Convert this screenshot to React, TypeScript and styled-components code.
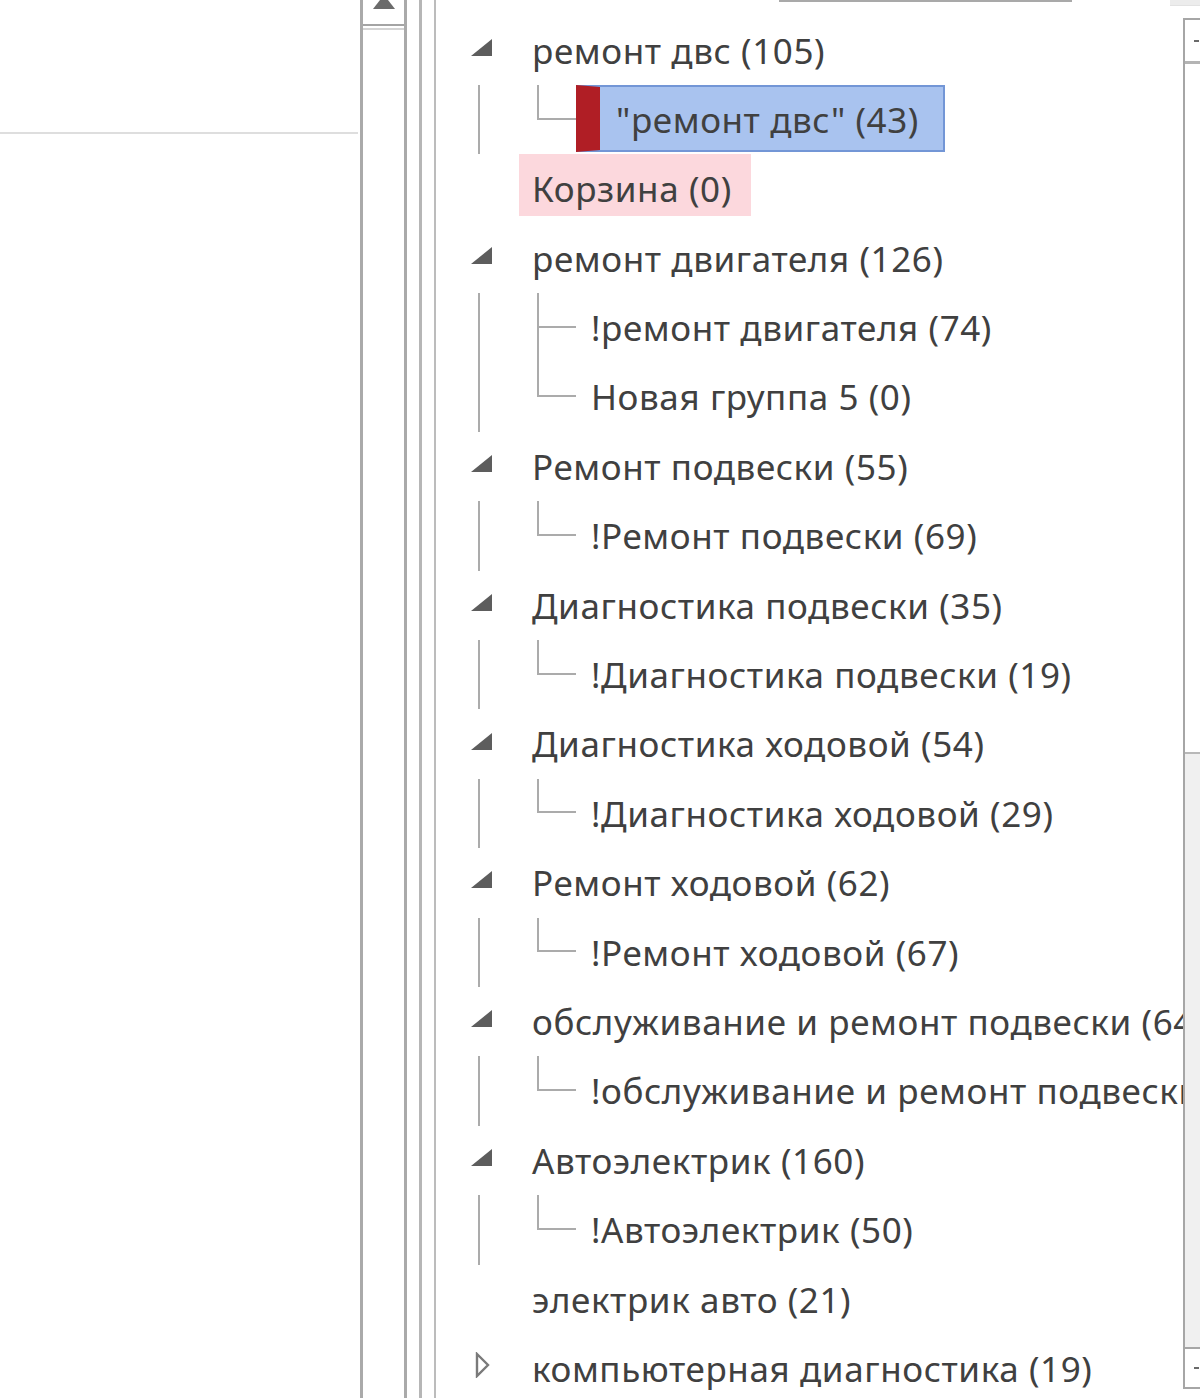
import * as React from 'react'
import styled, { createGlobalStyle } from 'styled-components'

type Child = {
    label: string
    selected?: boolean
}

type Node = {
    label: string
    expanded?: boolean
    collapsed?: boolean
    highlight?: boolean
    children?: Child[]
}

const tree: Node[] = [
    { label: 'ремонт двс (105)', expanded: true, children: [{ label: '"ремонт двс" (43)', selected: true }] },
    { label: 'Корзина (0)', highlight: true },
    {
        label: 'ремонт двигателя (126)',
        expanded: true,
        children: [{ label: '!ремонт двигателя (74)' }, { label: 'Новая группа 5 (0)' }],
    },
    { label: 'Ремонт подвески (55)', expanded: true, children: [{ label: '!Ремонт подвески (69)' }] },
    { label: 'Диагностика подвески (35)', expanded: true, children: [{ label: '!Диагностика подвески (19)' }] },
    { label: 'Диагностика ходовой (54)', expanded: true, children: [{ label: '!Диагностика ходовой (29)' }] },
    { label: 'Ремонт ходовой (62)', expanded: true, children: [{ label: '!Ремонт ходовой (67)' }] },
    {
        label: 'обслуживание и ремонт подвески (64)',
        expanded: true,
        children: [{ label: '!обслуживание и ремонт подвески (64)' }],
    },
    { label: 'Автоэлектрик (160)', expanded: true, children: [{ label: '!Автоэлектрик (50)' }] },
    { label: 'электрик авто (21)' },
    { label: 'компьютерная диагностика (19)', collapsed: true },
]

const ROW = 69.4

const GlobalStyle = createGlobalStyle`
    *, *::after, *::before {
        box-sizing: border-box;
    }
    html, body {
        margin: 0;
        padding: 0;
        background: #fff;
    }
`

const ExpandedGlyph = () => (
    <svg width="21" height="17" viewBox="0 0 21 17">
        <polygon points="21,0 21,17 0,17" fill="#5d5d5d" />
    </svg>
)

const CollapsedGlyph = () => (
    <svg width="15" height="26" viewBox="0 0 15 26">
        <polygon points="2,2 13,13 2,24" fill="none" stroke="#7a7a7a" strokeWidth="2.4" strokeLinejoin="miter" />
    </svg>
)

const ArrowUp = () => (
    <svg width="22" height="9" viewBox="0 0 22 9">
        <polygon points="7,0 15,0 22,9 0,9" fill="#6b6b6b" />
    </svg>
)

const App: React.FC = () => (
    <Page>
        <GlobalStyle />
        <LeftPane>
            <LeftHeader />
        </LeftPane>
        <LeftScroll>
            <ScrollUpButton>
                <ArrowUp />
            </ScrollUpButton>
            <LeftThumb />
        </LeftScroll>
        <Splitter />
        <TreePane>
            <TopStrip>
                <TopLine />
                <TopStub />
            </TopStrip>
            <TreeBody>
                <TreeList>
                    {tree.map((node, i) => (
                        <React.Fragment key={i}>
                            <Row>
                                <ToggleCell $collapsed={node.collapsed}>
                                    {node.expanded && <ExpandedGlyph />}
                                    {node.collapsed && <CollapsedGlyph />}
                                </ToggleCell>
                                <Label $highlight={node.highlight}>{node.label}</Label>
                            </Row>
                            {node.children && (
                                <Children>
                                    {node.children.map((child, j) => (
                                        <Row key={j}>
                                            <Elbow $last={j === node.children!.length - 1} />
                                            {child.selected ? (
                                                <SelectedLabel>{child.label}</SelectedLabel>
                                            ) : (
                                                <ChildLabel>{child.label}</ChildLabel>
                                            )}
                                        </Row>
                                    ))}
                                </Children>
                            )}
                        </React.Fragment>
                    ))}
                </TreeList>
                <RightScroll>
                    <RightButton>
                        <SmallArrow />
                    </RightButton>
                    <RightThumb />
                    <RightTrack />
                    <RightDownButton>
                        <SmallArrow />
                    </RightDownButton>
                </RightScroll>
            </TreeBody>
        </TreePane>
    </Page>
)

const Page = styled.div`
    display: flex;
    width: 1200px;
    height: 1398px;
    overflow: hidden;
    background: #fff;
    font-family: 'Noto Sans', 'Open Sans', 'DejaVu Sans', sans-serif;
    color: #404040;
`

const LeftPane = styled.div`
    width: 360px;
    flex: none;
    padding-right: 2px;
`

const LeftHeader = styled.div`
    height: 134px;
    border-bottom: 2px solid #dedede;
`

const LeftScroll = styled.div`
    width: 47px;
    flex: none;
    display: flex;
    flex-direction: column;
    border-left: 3px solid #aaaaaa;
    border-right: 3px solid #aaaaaa;
`

const ScrollUpButton = styled.div`
    height: 26px;
    display: flex;
    justify-content: center;
    align-items: flex-start;
    border-bottom: 2px solid #a4a4a4;
`

const LeftThumb = styled.div`
    flex: 1;
    margin-top: 2px;
    border-top: 2px solid #d4d4d4;
`

const Splitter = styled.div`
    width: 17px;
    flex: none;
    margin-left: 12px;
    border-left: 3px solid #b6b6b6;
    border-right: 2px solid #bcbcbc;
`

const TreePane = styled.div`
    flex: 1;
    display: flex;
    flex-direction: column;
    min-width: 0;
`

const TopStrip = styled.div`
    height: 15.5px;
    flex: none;
    display: flex;
    align-items: flex-start;
`

const TopLine = styled.div`
    margin-left: 343px;
    width: 293px;
    height: 2px;
    background: #a9a9a9;
`

const TopStub = styled.div`
    margin-left: auto;
    margin-right: 0;
    width: 30px;
    height: 6px;
    background: #ececec;
    border-bottom: 1px solid #e2e2e2;
`

const TreeBody = styled.div`
    flex: 1;
    display: flex;
    min-height: 0;
`

const TreeList = styled.div`
    flex: 1;
    min-width: 0;
    overflow: hidden;
    font-size: 35px;
    letter-spacing: 0.6px;
    white-space: nowrap;
`

const Row = styled.div`
    display: flex;
    align-items: stretch;
    height: ${ROW}px;
`

const ToggleCell = styled.div<{ $collapsed?: boolean }>`
    width: 83px;
    flex: none;
    display: flex;
    align-items: center;
    padding-left: ${p => (p.$collapsed ? 39 : 35)}px;
    padding-bottom: ${p => (p.$collapsed ? 7 : 6)}px;
`

const Label = styled.div<{ $highlight?: boolean }>`
    padding: 0 19px 0 13px;
    height: ${p => (p.$highlight ? 62 : ROW)}px;
    line-height: ${ROW}px;
    background: ${p => (p.$highlight ? '#fcd8dd' : 'transparent')};
`

const Children = styled.div`
    margin-left: 42px;
    border-left: 2px solid #ababab;
    margin-bottom: 0;
`

const Elbow = styled.div<{ $last: boolean }>`
    position: relative;
    width: 96px;
    flex: none;

    &::before {
        content: '';
        position: absolute;
        left: 57px;
        top: 0;
        width: 2px;
        height: ${p => (p.$last ? '50%' : '100%')};
        background: #ababab;
    }

    &::after {
        content: '';
        position: absolute;
        left: 57px;
        right: 0;
        top: calc(50% - 2px);
        height: 2px;
        background: #ababab;
    }
`

const ChildLabel = styled.div`
    padding-left: 15px;
    line-height: ${ROW}px;
`

const SelectedLabel = styled.div`
    height: 67px;
    line-height: ${ROW - 4}px;
    padding: 0 24px 0 16px;
    background: #a9c3ef;
    border: 2px solid #7396d6;
    border-left: 24px solid #b01e25;
    overflow: visible;
`

const RightScroll = styled.div`
    width: 17px;
    flex: none;
    margin-top: 2.5px;
    display: flex;
    flex-direction: column;
    border-left: 2px solid #a6a6a6;
    border-top: 2px solid #a6a6a6;
    margin-bottom: 9px;
`

const RightButton = styled.div`
    height: 44px;
    flex: none;
    display: flex;
    align-items: center;
    justify-content: flex-end;
    border-bottom: 3px solid #b4b4b4;
`

const SmallArrow = styled.div`
    width: 5px;
    height: 2px;
    margin-right: 1px;
    background: #6a6a6a;
`

const RightThumb = styled.div`
    height: 690px;
    flex: none;
    border-bottom: 2px solid #b8b8b8;
`

const RightTrack = styled.div`
    flex: 1;
    background: #f0f0f0;
`

const RightDownButton = styled.div`
    height: 42px;
    flex: none;
    display: flex;
    align-items: center;
    justify-content: flex-end;
    border-top: 2px solid #a6a6a6;
    border-bottom: 2px solid #a6a6a6;
    background: #fff;
`

export default App
